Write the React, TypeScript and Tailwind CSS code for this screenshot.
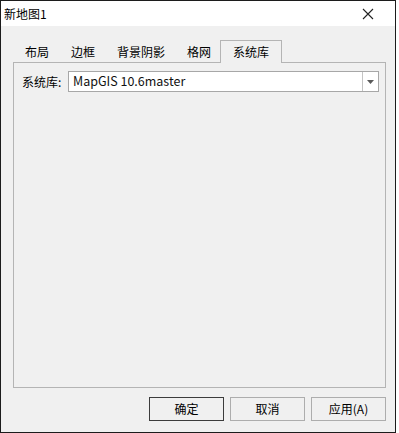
import React from "react";

const font = { fontFamily: '"Noto Sans CJK SC", "Microsoft YaHei", sans-serif' };

export default function App() {
  const tabs = ["布局", "边框", "背景阴影", "格网"];
  return (
    <div className="w-[399px] h-[433px] bg-white" style={font}>
      <div className="w-[396px] h-[433px] border border-[#1c1c1c] flex flex-col bg-[#f0f0f0] text-black">
        <div className="h-[25px] bg-white flex items-center justify-between shrink-0">
          <span className="pl-[3px] text-[12px] leading-none">新地图1</span>
          <svg width="12" height="12" viewBox="0 0 12 12" className="mr-[21px]">
            <path d="M1 1 L11 11 M11 1 L1 11" stroke="#222" strokeWidth="1.1" />
          </svg>
        </div>
        <div className="flex-1 flex flex-col px-[12px] pt-[14px]">
          <div className="flex items-end h-[22px] pl-[1px] relative z-10">
            {tabs.map((t) => (
              <div key={t} className="h-[20px] px-[11px] flex items-center text-[12px] leading-none">
                {t}
              </div>
            ))}
            <div className="ml-[-2px] h-[23px] mb-[-1px] px-[12px] flex items-center text-[12px] leading-none border border-b-0 border-[#b4b4b4] bg-[#f0f0f0]">
              系统库
            </div>
          </div>
          <div className="h-[326px] w-[373px] border border-[#b4b4b4] pt-[8px] pl-[8px]">
            <div className="flex items-center">
              <span className="text-[12px] leading-none w-[46px]">系统库:</span>
              <div className="w-[311px] h-[21px] bg-white border border-[#a7a7a7] flex items-center">
                <span className="flex-1 pl-[4px] text-[12.5px] leading-none text-[#111]">MapGIS 10.6master</span>
                <div className="w-[16px] h-full border-l border-[#c4c4c4] flex items-center justify-center">
                  <svg width="7" height="4" viewBox="0 0 7 4">
                    <path d="M0 0 L7 0 L3.5 4 Z" fill="#5a5a5a" />
                  </svg>
                </div>
              </div>
            </div>
          </div>
          <div className="flex justify-end gap-[6px] mt-[9px] mr-[-3px]">
            <button className="w-[75px] h-[24px] border border-[#3c3c3c] bg-[#f0f0f0] text-[12px] leading-none">确定</button>
            <button className="w-[75px] h-[24px] border border-[#adadad] bg-[#f0f0f0] text-[12px] leading-none">取消</button>
            <button className="w-[75px] h-[24px] border border-[#adadad] bg-[#f0f0f0] text-[12px] leading-none">应用(A)</button>
          </div>
        </div>
      </div>
    </div>
  );
}
